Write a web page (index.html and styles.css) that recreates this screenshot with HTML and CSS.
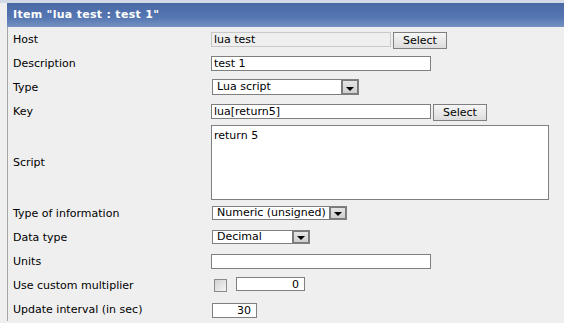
FILE: index.html
```html
<!DOCTYPE html>
<html lang="en">
<head>
  <meta charset="UTF-8">
  <title>Item "lua test : test 1"</title>
  <link rel="stylesheet" href="styles.css">
</head>
<body>
  <div class="page">
    <div class="header">Item "lua test : test 1"</div>
    <div class="form">
      <div class="row">
        <div class="label">Host</div>
        <div class="field">
          <span class="input readonly w-host">lua test</span>
          <span class="button">Select</span>
        </div>
      </div>
      <div class="row">
        <div class="label">Description</div>
        <div class="field"><span class="input w-long">test 1</span></div>
      </div>
      <div class="row">
        <div class="label">Type</div>
        <div class="field">
          <span class="select w-type"><span class="value">Lua script</span><span class="arrow"></span></span>
        </div>
      </div>
      <div class="row">
        <div class="label">Key</div>
        <div class="field">
          <span class="input w-long">lua[return5]</span>
          <span class="button">Select</span>
        </div>
      </div>
      <div class="row script-row">
        <div class="label">Script</div>
        <div class="field"><div class="textarea">return 5</div></div>
      </div>
      <div class="row">
        <div class="label">Type of information</div>
        <div class="field">
          <span class="select w-info"><span class="value">Numeric (unsigned)</span><span class="arrow"></span></span>
        </div>
      </div>
      <div class="row">
        <div class="label">Data type</div>
        <div class="field">
          <span class="select w-data"><span class="value">Decimal</span><span class="arrow"></span></span>
        </div>
      </div>
      <div class="row">
        <div class="label">Units</div>
        <div class="field"><span class="input w-long"></span></div>
      </div>
      <div class="row">
        <div class="label">Use custom multiplier</div>
        <div class="field">
          <span class="checkbox"></span>
          <span class="input number w-mult">0</span>
        </div>
      </div>
      <div class="row">
        <div class="label">Update interval (in sec)</div>
        <div class="field"><span class="input number w-delay">30</span></div>
      </div>
    </div>
  </div>
</body>
</html>
```

FILE: styles.css
```css
body {
  margin: 0;
  background: #efefef;
  font-family: "DejaVu Sans", Verdana, sans-serif;
  font-size: 11px;
  color: #000;
}

.page {
  padding: 3px 0 0 7px;
  background: linear-gradient(to bottom, #d3d9e6 0, #d3d9e6 3px, #efefef 3px);
}

/* Title bar */
.header {
  height: 24px;
  line-height: 23px;
  padding-left: 6px;
  color: #fff;
  font-weight: bold;
  font-size: 11px;
  letter-spacing: 0.3px;
  background: linear-gradient(to bottom, #4a69a6 0%, #5476b1 60%, #7692c2 100%);
}

.form {
  border-left: 1px solid #a7a7a7;
}

.row {
  display: flex;
  align-items: center;
  height: 24px;
}

.script-row {
  height: 78px;
}

.label {
  width: 198px;
  padding-left: 5px;
  flex-shrink: 0;
}

.field {
  display: flex;
  align-items: center;
  gap: 2px;
}

/* Form controls */
.input {
  box-sizing: border-box;
  display: block;
  height: 15px;
  line-height: 13px;
  padding: 0 2px;
  background: #fff;
  border: 1px solid #7f7f7f;
}

.input.readonly {
  background: #efefef;
  border-color: #c9c9c9;
}

.input.number {
  text-align: right;
  padding-right: 5px;
}

.w-host { width: 180px; }
.w-long { width: 220px; }
.w-mult { width: 69px; height: 14px; margin-left: 7px; margin-top: -2px; }
.w-delay { width: 45px; margin-left: 1px; margin-top: 2px; }

.button {
  box-sizing: border-box;
  display: block;
  height: 17px;
  line-height: 15px;
  padding: 0 9px;
  border: 1px solid #7f7f7f;
  background: linear-gradient(to bottom, #f6f6f6, #dcdcdc);
  margin-top: 2px;
}

.select {
  box-sizing: border-box;
  display: flex;
  height: 16px;
  margin-left: 1px;
  background: #fff;
  border: 1px solid #7f7f7f;
}

.select .value {
  flex: 1;
  line-height: 14px;
  padding-left: 4px;
}

.select .arrow {
  position: relative;
  width: 14px;
  border: 1px solid #7a7a7a;
  border-width: 1px 1px 1px 2px;
  background: linear-gradient(to bottom, #e4e4e4, #cfcfcf);
}

.select .arrow::after {
  content: "";
  position: absolute;
  left: 3px;
  bottom: 2px;
  border-top: 4px solid #000;
  border-left: 4px solid transparent;
  border-right: 4px solid transparent;
}

.w-type { width: 147px; }
.w-info { width: 135px; height: 14px; }
.w-info .value, .w-data .value { line-height: 12px; }
.w-data { width: 98px; height: 14px; }

.textarea {
  box-sizing: border-box;
  width: 338px;
  height: 75px;
  padding: 3px 2px;
  background: #fff;
  border: 1px solid #7f7f7f;
  margin-top: 1px;
}

.checkbox {
  box-sizing: border-box;
  display: block;
  width: 13px;
  height: 13px;
  margin-left: 3px;
  border: 1px solid #8a8a8a;
  background: linear-gradient(135deg, #d0d0d0, #f6f6f6);
}
```
